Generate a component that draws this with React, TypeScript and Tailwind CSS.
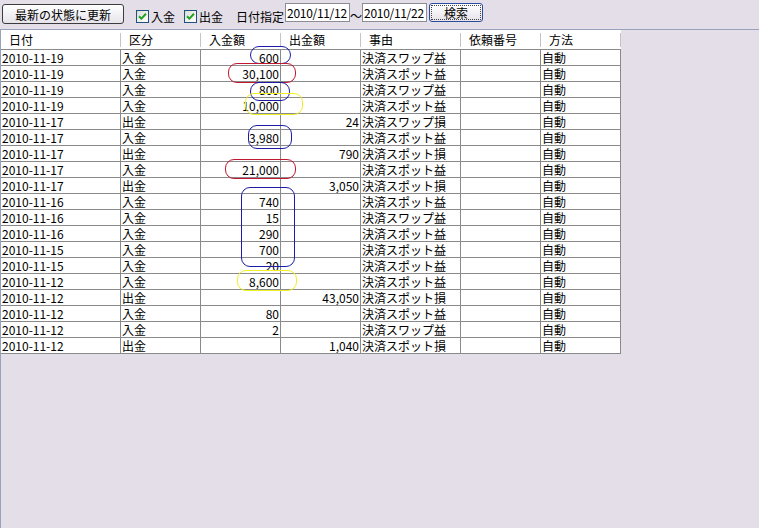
import React from "react";

type Row = [string, string, string, string, string];

const rows: Row[] = [
  ["2010-11-19", "入金", "600", "", "決済スワップ益"],
  ["2010-11-19", "入金", "30,100", "", "決済スポット益"],
  ["2010-11-19", "入金", "800", "", "決済スワップ益"],
  ["2010-11-19", "入金", "10,000", "", "決済スポット益"],
  ["2010-11-17", "出金", "", "24", "決済スワップ損"],
  ["2010-11-17", "入金", "3,980", "", "決済スポット益"],
  ["2010-11-17", "出金", "", "790", "決済スポット損"],
  ["2010-11-17", "入金", "21,000", "", "決済スポット益"],
  ["2010-11-17", "出金", "", "3,050", "決済スポット損"],
  ["2010-11-16", "入金", "740", "", "決済スポット益"],
  ["2010-11-16", "入金", "15", "", "決済スワップ益"],
  ["2010-11-16", "入金", "290", "", "決済スポット益"],
  ["2010-11-15", "入金", "700", "", "決済スポット益"],
  ["2010-11-15", "入金", "20", "", "決済スポット益"],
  ["2010-11-12", "入金", "8,600", "", "決済スポット益"],
  ["2010-11-12", "出金", "", "43,050", "決済スポット損"],
  ["2010-11-12", "入金", "80", "", "決済スポット益"],
  ["2010-11-12", "入金", "2", "", "決済スワップ益"],
  ["2010-11-12", "出金", "", "1,040", "決済スポット損"],
];

const ovals: { x: number; y: number; w: number; h: number; c: string }[] = [
  { x: 250, y: 46, w: 41, h: 18, c: "#1c1ca8" },
  { x: 228, y: 63, w: 68, h: 20, c: "#c01830" },
  { x: 250, y: 82, w: 40, h: 19, c: "#1c1ca8" },
  { x: 245, y: 93, w: 58, h: 22, c: "#f0f028" },
  { x: 248, y: 125, w: 44, h: 24, c: "#1c1ca8" },
  { x: 225, y: 159, w: 71, h: 20, c: "#c01830" },
  { x: 241, y: 187, w: 54, h: 80, c: "#1c1ca8" },
  { x: 237, y: 270, w: 60, h: 21, c: "#f0f028" },
];

function Check() {
  return (
    <span className="inline-flex h-[13px] w-[13px] items-center justify-center border border-[#1c5180] bg-gradient-to-br from-[#dcdcd6] to-white">
      <svg width="9" height="9" viewBox="0 0 9 9">
        <path d="M1 4.2 L3.4 6.6 L8 1.8" fill="none" stroke="#21a121" strokeWidth="2" />
      </svg>
    </span>
  );
}

const font = "font-['MS_UI_Gothic','Noto_Sans_CJK_JP',sans-serif]";

export default function App() {
  return (
    <div className={`relative h-[528px] w-[759px] overflow-hidden bg-[#e3dee7] text-[12px] leading-[15px] text-black ${font}`}>
      {/* toolbar */}
      <div className="flex h-[29px] items-start pl-[2px] pt-[4px]">
        <button className="flex h-[20px] w-[122px] items-center justify-center rounded-[3px] border border-[#3c3c3c] bg-gradient-to-b from-white to-[#e6e3ea] text-[12px]">
          最新の状態に更新
        </button>
        <div className="ml-[12px] mt-[5px] flex items-center">
          <Check />
          <span className="ml-[2px]">入金</span>
        </div>
        <div className="ml-[9px] mt-[5px] flex items-center">
          <Check />
          <span className="ml-[2px]">出金</span>
        </div>
        <span className="ml-[13px] mt-[5px]">日付指定</span>
        <div className="ml-[1px] mt-[-1px] flex h-[19px] w-[65px] items-center overflow-hidden border border-[#8c8c94] bg-white pl-[1px] tracking-[-0.3px]">2010/11/12</div>
        <span className="mt-[4px] w-[12px] text-center">～</span>
        <div className="mt-[-1px] flex h-[19px] w-[65px] items-center overflow-hidden border border-[#8c8c94] bg-white pl-[1px] tracking-[-0.3px]">2010/11/22</div>
        <button className="ml-[2px] mt-[-1px] flex h-[19px] w-[54px] items-center justify-center rounded-[3px] border border-[#2a4c9c] bg-gradient-to-b from-white to-[#e6e3ea] p-[1px]">
          <span className="flex h-full w-full items-center justify-center border border-dotted border-[#444]">検索</span>
        </button>
      </div>

      {/* grid */}
      <div className="h-[499px] border-l border-t border-[#98a2bc]">
        <div className="w-[620px]">
          <div className="flex h-[20px] border-b border-[#8a8a8a] bg-white">
            {[
              ["日付", "w-[120px]"],
              ["区分", "w-[80px]"],
              ["入金額", "w-[80px]"],
              ["出金額", "w-[80px]"],
              ["事由", "w-[100px]"],
              ["依頼番号", "w-[80px]"],
              ["方法", "w-[80px]"],
            ].map(([t, w]) => (
              <div key={t} className={`${w} relative flex items-center pl-[8px]`}>
                {t}
                <span className="absolute right-0 top-[3px] h-[14px] w-px bg-[#c4c4c8]" />
              </div>
            ))}
          </div>
          {rows.map((r, i) => (
            <div key={i} className="flex h-[16px] border-b border-[#8a8a8a] bg-white">
              <div className="w-[120px] border-r border-[#8a8a8a] pl-[1px]">{r[0]}</div>
              <div className="w-[80px] border-r border-[#8a8a8a] pl-[1px]">{r[1]}</div>
              <div className="w-[80px] border-r border-[#8a8a8a] pr-[1px] text-right">{r[2]}</div>
              <div className="w-[80px] border-r border-[#8a8a8a] pr-[1px] text-right">{r[3]}</div>
              <div className="w-[100px] whitespace-nowrap border-r border-[#8a8a8a] pl-[1px]">{r[4]}</div>
              <div className="w-[80px] border-r border-[#8a8a8a]"></div>
              <div className="w-[80px] border-r border-[#8a8a8a] pl-[1px]">自動</div>
            </div>
          ))}
        </div>
      </div>

      {ovals.map((o, i) => (
        <div
          key={i}
          className="pointer-events-none absolute rounded-[9px] border-[1.5px]"
          style={{ left: o.x, top: o.y, width: o.w, height: o.h, borderColor: o.c }}
        />
      ))}
    </div>
  );
}
